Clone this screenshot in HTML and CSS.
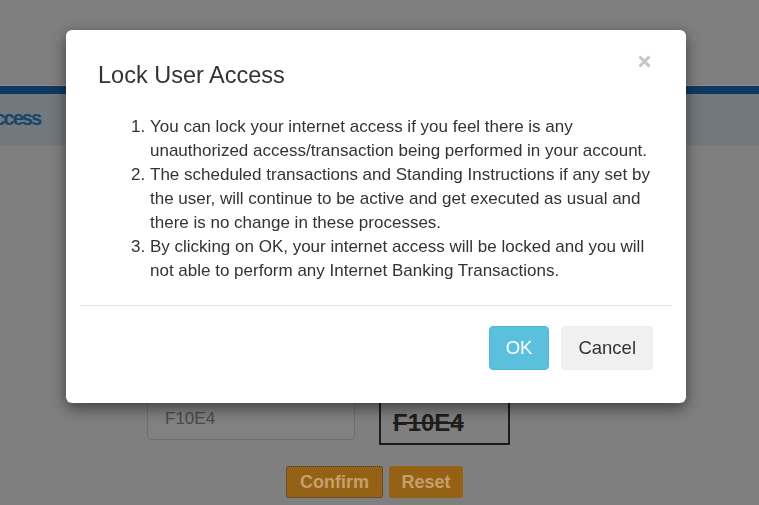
FILE: index.html
```html
<!DOCTYPE html>
<html lang="en">
<head>
<meta charset="utf-8">
<title>Lock User Access</title>
<link rel="stylesheet" href="styles.css">
</head>
<body>
<div class="page">
  <div class="topbar"></div>
  <div class="navline"></div>
  <div class="titleband"><h1 class="pagetitle">Access</h1></div>
  <div class="content">
    <div class="captcha-row">
      <div class="cap-input">F10E4</div>
      <div class="cap-image">F10E4</div>
    </div>
    <div class="actions">
      <button class="btn-orange btn-focus">Confirm</button>
      <button class="btn-orange btn-reset">Reset</button>
    </div>
  </div>
</div>

<div class="backdrop">
  <div class="modal">
    <div class="modal-header">
      <h4 class="modal-title">Lock User Access</h4>
      <button class="close" aria-label="Close">
        <svg width="13" height="13" viewBox="0 0 13 13"><path d="M1.5 1.5 L11.5 11.5 M11.5 1.5 L1.5 11.5" stroke="#c6c6c6" stroke-width="3" stroke-linecap="butt"/></svg>
      </button>
    </div>
    <div class="modal-body">
      <ol class="rules">
        <li>You can lock your internet access if you feel there is any unauthorized access/transaction being performed in your account.</li>
        <li>The scheduled transactions and Standing Instructions if any set by the user, will continue to be active and get executed as usual and there is no change in these processes.</li>
        <li>By clicking on OK, your internet access will be locked and you will not able to perform any Internet Banking Transactions.</li>
      </ol>
    </div>
    <div class="modal-footer">
      <button class="btn btn-ok">OK</button>
      <button class="btn btn-cancel">Cancel</button>
    </div>
  </div>
</div>
</body>
</html>
```

FILE: styles.css
```css
html, body {
  margin: 0;
  padding: 0;
}
body {
  background: #7f7f7f;
  font-family: "Liberation Sans", Arial, sans-serif;
  overflow: hidden;
  width: 759px;
  height: 505px;
}

/* Background page (dimmed) */
.page {
  width: 759px;
}
.topbar {
  height: 85px;
  background: #7f7f7f;
  border-bottom: 1px solid #898c8f;
}
.navline {
  height: 8px;
  background: #0f3963;
}
.titleband {
  height: 51px;
  background: #71797e;
  border-bottom: 1px solid #7a7c7e;
  overflow: hidden;
}
.pagetitle {
  margin: 0 0 0 -18px;
  font-size: 20px;
  font-weight: bold;
  letter-spacing: -2px;
  line-height: 49px;
  color: #184668;
}
.content {
  padding-top: 252px;
}
.captcha-row {
  display: flex;
  align-items: flex-start;
  padding-left: 147px;
}
.cap-input {
  box-sizing: border-box;
  width: 208px;
  height: 42px;
  border: 1px solid #6f6f6f;
  border-radius: 4px;
  background: #818181;
  padding-left: 17px;
  font-size: 17px;
  line-height: 40px;
  color: #4a4a4a;
}
.cap-image {
  box-sizing: border-box;
  margin-left: 24px;
  width: 131px;
  height: 47px;
  border: 2px solid #1c1c1c;
  padding: 3px 0 0 12px;
  font-size: 24px;
  font-weight: bold;
  line-height: 40px;
  color: #1e1e1e;
  text-decoration: line-through;
}
.actions {
  display: flex;
  gap: 6px;
  margin-top: 21px;
  padding-left: 286px;
}
.btn-orange {
  height: 32px;
  border: none;
  border-radius: 3px;
  background: #956114;
  color: #c4a06c;
  font-family: "Liberation Sans", Arial, sans-serif;
  font-size: 18px;
  font-weight: bold;
  padding: 0;
}
.btn-focus {
  width: 97px;
  outline: 1px dotted #3c3c3c;
  outline-offset: -1px;
}
.btn-reset {
  width: 74px;
}

/* Modal */
.backdrop {
  position: fixed;
  inset: 0;
}
.modal {
  box-sizing: border-box;
  width: 620px;
  margin: 30px 0 0 66px;
  padding: 0 14px;
  background: #fff;
  border-radius: 6px;
  box-shadow: 0 5px 15px rgba(0, 0, 0, 0.5);
  color: #333;
}
.modal-header {
  display: flex;
  justify-content: space-between;
  align-items: flex-start;
  padding: 25px 18px 0 18px;
}
.modal-title {
  margin: 5px 0 0 0;
  font-size: 23.5px;
  font-weight: normal;
  line-height: 30px;
  color: #333;
}
.close {
  display: block;
  width: 13px;
  height: 13px;
  margin-right: 3px;
  padding: 0;
  border: none;
  background: none;
}
.close svg {
  display: block;
}
.modal-body {
  padding: 25px 12px 22px 18px;
}
.rules {
  margin: 0;
  padding-left: 52px;
  font-size: 17px;
  line-height: 24px;
  color: #333;
}
.modal-footer {
  display: flex;
  justify-content: flex-end;
  gap: 12px;
  border-top: 1px solid #e5e5e5;
  padding: 20px 19px 33px;
}
.btn {
  box-sizing: border-box;
  height: 44px;
  padding: 0 16px;
  border-radius: 4px;
  font-family: "Liberation Sans", Arial, sans-serif;
  font-size: 18.5px;
}
.btn-ok {
  background: #5bc0de;
  border: 1px solid #4cb9da;
  color: #fff;
}
.btn-cancel {
  background: #f0f0f0;
  border: 1px solid #efefef;
  color: #333;
}
```
